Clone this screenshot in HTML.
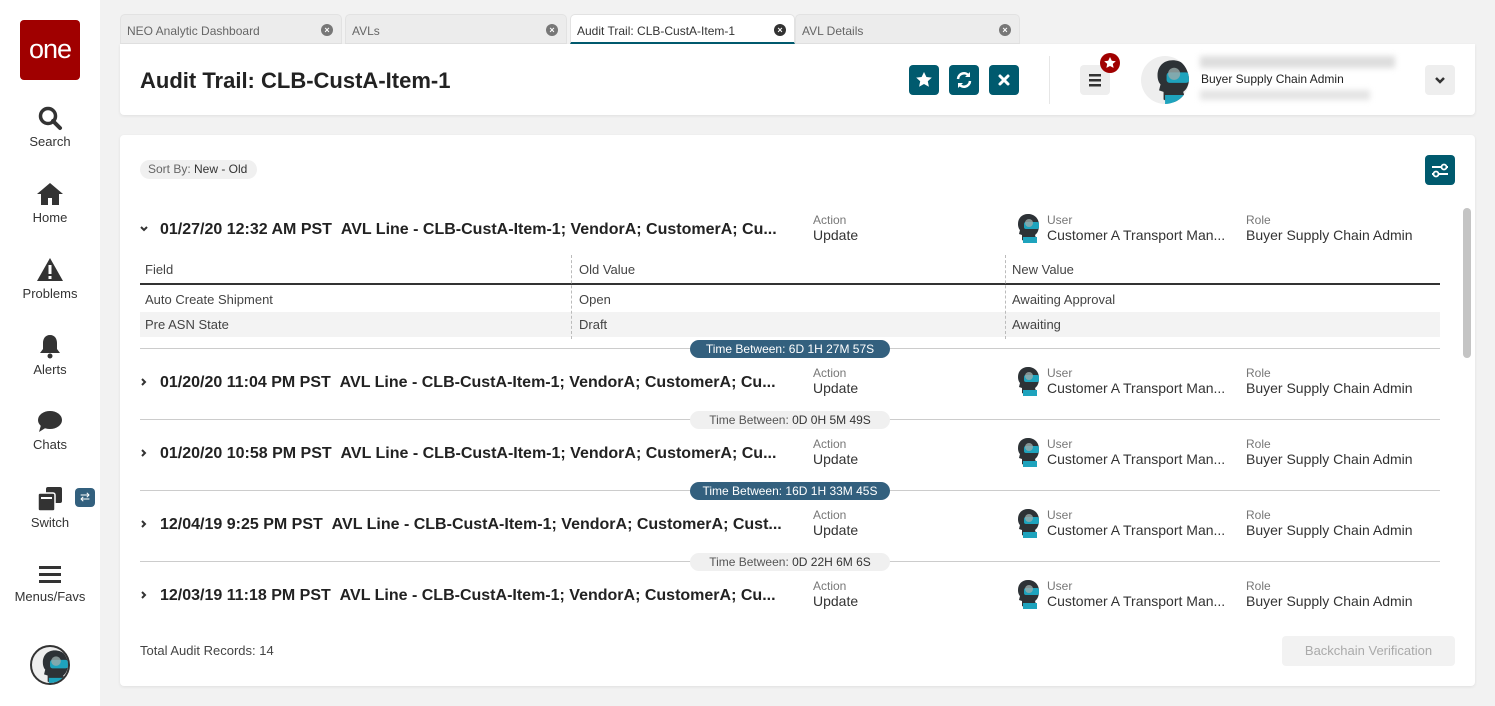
<!DOCTYPE html>
<html><head><style>
*{box-sizing:border-box;margin:0;padding:0}
body{width:1495px;height:706px;background:#f2f2f2;font-family:"Liberation Sans",sans-serif;color:#333;position:relative;overflow:hidden}
.a{position:absolute}
.side{left:0;top:0;width:100px;height:706px;background:#fff}
.nav{position:absolute;left:0;width:100px;text-align:center;font-size:13px;color:#333}
.tab{position:absolute;top:14px;height:30px;background:#ececec;border-radius:5px 5px 0 0;font-size:12px;color:#666;padding:9px 6px;border:1px solid #e2e2e2}
.tab .x{position:absolute;right:8px;top:9px;width:12px;height:12px;border-radius:50%;background:#777;color:#fff;font-size:9px;line-height:12px;text-align:center;font-weight:bold}
.btn{position:absolute;top:65px;width:30px;height:30px;background:#005a6e;border-radius:4px}
.rh{position:absolute;left:160px;width:625px;font-size:16px;font-weight:bold;white-space:nowrap;overflow:hidden;color:#222}
.car{position:absolute;left:139px}
.lbl{position:absolute;font-size:12px;color:#777}
.val{position:absolute;font-size:14px;color:#333;white-space:nowrap}
.sep{position:absolute;left:140px;width:1300px;height:1px;background:#ccc}
.pill{position:absolute;left:690px;width:200px;height:18px;border-radius:9px;font-size:12px;text-align:center;line-height:18px}
.dk{background:#33607e;color:#fff}
.lt{background:#f0f0f0;color:#555}
.ui{position:absolute;left:1015px;width:25px;height:30px}
.td{position:absolute;font-size:13px;color:#444}
</style></head><body>
<svg width="0" height="0" style="position:absolute"><defs><symbol id="hd" viewBox="0 0 25 30"><path d="M13 1c-6 0-10 4-10 10 0 3 1 5 2 6l-1 4 3 1v5c3 2 10 2 15 1l-2-6c3-2 4-6 4-10C24 5 19 1 13 1z" fill="#2d3236"/><rect x="9" y="9" width="15" height="7" rx="2" fill="#1ea3bd"/><circle cx="14" cy="10" r="4" fill="#9aa" opacity=".8"/><path d="M8 24h14v6H8z" fill="#1ea3bd"/></symbol></defs></svg>
<div class="a side"></div>
<div class="a" style="left:20px;top:20px;width:60px;height:60px;background:#a00000;border-radius:4px;color:#fff;font-size:27px;text-align:center;line-height:58px;letter-spacing:-1px">one</div>
<div class="nav" style="top:105px"><svg width="26" height="26" viewBox="0 0 26 26"><circle cx="11" cy="11" r="7.5" fill="none" stroke="#333" stroke-width="3.5"/><path d="M16 16l7 7" stroke="#333" stroke-width="4" stroke-linecap="round"/></svg><div style="margin-top:0">Search</div></div>
<div class="nav" style="top:181px"><svg width="28" height="26" viewBox="0 0 28 26"><path d="M14 2L1 13h4v11h7v-7h4v7h7V13h4z" fill="#333"/></svg><div>Home</div></div>
<div class="nav" style="top:257px"><svg width="28" height="26" viewBox="0 0 28 26"><path d="M14 1L1 24h26z" fill="#333"/><rect x="12.5" y="8" width="3" height="9" fill="#fff"/><rect x="12.5" y="19" width="3" height="3" fill="#fff"/></svg><div>Problems</div></div>
<div class="nav" style="top:333px"><svg width="26" height="26" viewBox="0 0 26 26"><path d="M13 2c-5 0-7 4-7 8v6l-3 4h20l-3-4v-6c0-4-2-8-7-8z" fill="#333"/><circle cx="13" cy="23" r="2.5" fill="#333"/></svg><div>Alerts</div></div>
<div class="nav" style="top:410px"><svg width="28" height="24" viewBox="0 0 28 24"><ellipse cx="14" cy="10" rx="12" ry="9" fill="#333"/><path d="M5 15l-2 7 8-5z" fill="#333"/></svg><div>Chats</div></div>
<div class="nav" style="top:486px"><svg width="26" height="26" viewBox="0 0 26 26"><rect x="9" y="1" width="16" height="16" rx="2" fill="#333"/><rect x="1" y="7" width="17" height="18" rx="2" fill="#333" stroke="#fff" stroke-width="1.5"/><rect x="4" y="11" width="11" height="2" fill="#fff"/></svg><div>Switch</div></div>
<div class="a" style="left:75px;top:488px;width:20px;height:19px;background:#33607e;border-radius:4px;color:#fff;font-size:12px;text-align:center;line-height:19px">⇄</div>
<div class="nav" style="top:564px"><svg width="24" height="22" viewBox="0 0 24 22"><rect x="1" y="2" width="22" height="3" fill="#333"/><rect x="1" y="9" width="22" height="3" fill="#333"/><rect x="1" y="16" width="22" height="3" fill="#333"/></svg><div>Menus/Favs</div></div>
<div class="a" style="left:30px;top:645px;width:40px;height:40px;border-radius:50%;background:#eee;border:2px solid #333;overflow:hidden"><svg width="36" height="36" viewBox="-4 -2 33 34"><use href="#hd"/></svg></div>

<div class="tab" style="left:120px;width:222px">NEO Analytic Dashboard<span class="x">×</span></div>
<div class="tab" style="left:345px;width:222px">AVLs<span class="x">×</span></div>
<div class="tab" style="left:570px;width:225px;background:#fff;color:#333;border-bottom:2px solid #005a6e">Audit Trail: CLB-CustA-Item-1<span class="x" style="background:#333">×</span></div>
<div class="tab" style="left:795px;width:225px">AVL Details<span class="x">×</span></div>

<div class="a" style="left:120px;top:44px;width:1355px;height:71px;background:#fff;border-radius:0 0 4px 4px;box-shadow:0 1px 3px rgba(0,0,0,.08)"></div>
<div class="a" style="left:140px;top:68px;font-size:22px;font-weight:bold;color:#222">Audit Trail: CLB-CustA-Item-1</div>
<div class="btn" style="left:909px"><svg width="30" height="30" viewBox="0 0 30 30"><path d="M15 7l2.4 5 5.4.6-4 3.7 1.1 5.4L15 19l-4.9 2.7 1.1-5.4-4-3.7 5.4-.6z" fill="#fff"/></svg></div>
<div class="btn" style="left:949px"><svg width="30" height="30" viewBox="0 0 30 30"><path d="M9 14a6 6 0 0 1 11-3M21 16a6 6 0 0 1-11 3" stroke="#fff" stroke-width="2.5" fill="none"/><path d="M21 7v5h-5zM9 23v-5h5z" fill="#fff"/></svg></div>
<div class="btn" style="left:989px"><svg width="30" height="30" viewBox="0 0 30 30"><path d="M11 11l8 8M19 11l-8 8" stroke="#fff" stroke-width="3" stroke-linecap="round"/></svg></div>
<div class="a" style="left:1049px;top:56px;width:1px;height:48px;background:#e6e6e6"></div>
<div class="a" style="left:1080px;top:65px;width:30px;height:30px;background:#eee;border-radius:4px"><svg width="30" height="30" viewBox="0 0 30 30"><rect x="9" y="9" width="12" height="2.5" fill="#333"/><rect x="9" y="14" width="12" height="2.5" fill="#333"/><rect x="9" y="19" width="12" height="2.5" fill="#333"/></svg></div>
<div class="a" style="left:1100px;top:53px;width:20px;height:20px;border-radius:50%;background:#a00000"><svg width="20" height="20" viewBox="0 0 20 20"><path d="M10 4l1.8 3.7 4 .5-3 2.7.8 4L10 13l-3.6 1.9.8-4-3-2.7 4-.5z" fill="#fff"/></svg></div>
<div class="a" style="left:1141px;top:56px;width:48px;height:48px;border-radius:50%;background:#eee;overflow:hidden"><svg width="48" height="48" viewBox="-5 -1 35 33"><use href="#hd"/></svg></div>
<div class="a" style="left:1200px;top:56px;width:195px;height:12px;background:#ddd;filter:blur(3px)"></div>
<div class="a" style="left:1201px;top:72px;font-size:12px;color:#222">Buyer Supply Chain Admin</div>
<div class="a" style="left:1200px;top:90px;width:170px;height:10px;background:#e4e4e4;filter:blur(3px)"></div>
<div class="a" style="left:1425px;top:65px;width:30px;height:30px;background:#eee;border-radius:4px;text-align:center"><svg width="30" height="30" viewBox="0 0 30 30"><path d="M11 13l4 4 4-4" stroke="#333" stroke-width="2.5" fill="none"/></svg></div>

<div class="a" style="left:120px;top:135px;width:1355px;height:551px;background:#fff;border-radius:4px;box-shadow:0 1px 3px rgba(0,0,0,.08)"></div>
<div class="a" style="left:140px;top:160px;width:117px;height:19px;background:#f0f0f0;border-radius:10px;font-size:12px;color:#666;line-height:19px;padding-left:8px">Sort By: <span style="color:#333">New - Old</span></div>
<div class="a" style="left:1425px;top:155px;width:30px;height:30px;background:#005a6e;border-radius:4px"><svg width="30" height="30" viewBox="0 0 30 30"><path d="M7 12h16M7 19h16" stroke="#fff" stroke-width="2"/><circle cx="19" cy="12" r="2.5" fill="#005a6e" stroke="#fff" stroke-width="1.8"/><circle cx="11" cy="19" r="2.5" fill="#005a6e" stroke="#fff" stroke-width="1.8"/></svg></div>
<div class="a" style="left:1463px;top:208px;width:8px;height:150px;background:#c4c4c4;border-radius:4px"></div>

<!-- row 1 -->
<svg class="car" style="top:224px" width="10" height="10" viewBox="0 0 10 10"><path d="M2 3l3 3 3-3" stroke="#333" stroke-width="2" fill="none"/></svg>
<div class="rh" style="top:221px">01/27/20 12:32 AM PST&nbsp;&nbsp;AVL Line - CLB-CustA-Item-1; VendorA; CustomerA; Cu...</div>
<div class="lbl" style="left:813px;top:213px">Action</div><div class="val" style="left:813px;top:227px">Update</div>
<svg class="ui" style="top:213px" viewBox="0 0 25 30"><use href="#hd"/></svg>
<div class="lbl" style="left:1047px;top:213px">User</div><div class="val" style="left:1047px;top:227px">Customer A Transport Man...</div>
<div class="lbl" style="left:1246px;top:213px">Role</div><div class="val" style="left:1246px;top:227px">Buyer Supply Chain Admin</div>

<div class="td" style="left:145px;top:262px">Field</div>
<div class="td" style="left:579px;top:262px">Old Value</div>
<div class="td" style="left:1012px;top:262px">New Value</div>
<div class="a" style="left:140px;top:283px;width:1300px;height:2px;background:#333"></div>
<div class="td" style="left:145px;top:292px">Auto Create Shipment</div>
<div class="td" style="left:579px;top:292px">Open</div>
<div class="td" style="left:1012px;top:292px">Awaiting Approval</div>
<div class="a" style="left:140px;top:312px;width:1300px;height:25px;background:#f3f3f3"></div>
<div class="td" style="left:145px;top:317px">Pre ASN State</div>
<div class="td" style="left:579px;top:317px">Draft</div>
<div class="td" style="left:1012px;top:317px">Awaiting</div>
<div class="a" style="left:571px;top:255px;height:84px;border-left:1px dashed #bbb"></div>
<div class="a" style="left:1005px;top:255px;height:84px;border-left:1px dashed #bbb"></div>

<div class="sep" style="top:348px"></div><div class="pill dk" style="top:340px">Time Between: 6D 1H 27M 57S</div>
<div class="sep" style="top:419px"></div><div class="pill lt" style="top:411px">Time Between: <span style="color:#333">0D 0H 5M 49S</span></div>
<div class="sep" style="top:490px"></div><div class="pill dk" style="top:482px">Time Between: 16D 1H 33M 45S</div>
<div class="sep" style="top:561px"></div><div class="pill lt" style="top:553px">Time Between: <span style="color:#333">0D 22H 6M 6S</span></div>

<!-- rows 2-5 -->
<svg class="car" style="top:377px" width="10" height="10" viewBox="0 0 10 10"><path d="M3 2l3 3-3 3" stroke="#333" stroke-width="2" fill="none"/></svg>
<div class="rh" style="top:374px">01/20/20 11:04 PM PST&nbsp;&nbsp;AVL Line - CLB-CustA-Item-1; VendorA; CustomerA; Cu...</div>
<div class="lbl" style="left:813px;top:366px">Action</div><div class="val" style="left:813px;top:380px">Update</div>
<svg class="ui" style="top:366px" viewBox="0 0 25 30"><use href="#hd"/></svg>
<div class="lbl" style="left:1047px;top:366px">User</div><div class="val" style="left:1047px;top:380px">Customer A Transport Man...</div>
<div class="lbl" style="left:1246px;top:366px">Role</div><div class="val" style="left:1246px;top:380px">Buyer Supply Chain Admin</div>

<svg class="car" style="top:448px" width="10" height="10" viewBox="0 0 10 10"><path d="M3 2l3 3-3 3" stroke="#333" stroke-width="2" fill="none"/></svg>
<div class="rh" style="top:445px">01/20/20 10:58 PM PST&nbsp;&nbsp;AVL Line - CLB-CustA-Item-1; VendorA; CustomerA; Cu...</div>
<div class="lbl" style="left:813px;top:437px">Action</div><div class="val" style="left:813px;top:451px">Update</div>
<svg class="ui" style="top:437px" viewBox="0 0 25 30"><use href="#hd"/></svg>
<div class="lbl" style="left:1047px;top:437px">User</div><div class="val" style="left:1047px;top:451px">Customer A Transport Man...</div>
<div class="lbl" style="left:1246px;top:437px">Role</div><div class="val" style="left:1246px;top:451px">Buyer Supply Chain Admin</div>

<svg class="car" style="top:519px" width="10" height="10" viewBox="0 0 10 10"><path d="M3 2l3 3-3 3" stroke="#333" stroke-width="2" fill="none"/></svg>
<div class="rh" style="top:516px">12/04/19 9:25 PM PST&nbsp;&nbsp;AVL Line - CLB-CustA-Item-1; VendorA; CustomerA; Cust...</div>
<div class="lbl" style="left:813px;top:508px">Action</div><div class="val" style="left:813px;top:522px">Update</div>
<svg class="ui" style="top:508px" viewBox="0 0 25 30"><use href="#hd"/></svg>
<div class="lbl" style="left:1047px;top:508px">User</div><div class="val" style="left:1047px;top:522px">Customer A Transport Man...</div>
<div class="lbl" style="left:1246px;top:508px">Role</div><div class="val" style="left:1246px;top:522px">Buyer Supply Chain Admin</div>

<svg class="car" style="top:590px" width="10" height="10" viewBox="0 0 10 10"><path d="M3 2l3 3-3 3" stroke="#333" stroke-width="2" fill="none"/></svg>
<div class="rh" style="top:587px">12/03/19 11:18 PM PST&nbsp;&nbsp;AVL Line - CLB-CustA-Item-1; VendorA; CustomerA; Cu...</div>
<div class="lbl" style="left:813px;top:579px">Action</div><div class="val" style="left:813px;top:593px">Update</div>
<svg class="ui" style="top:579px" viewBox="0 0 25 30"><use href="#hd"/></svg>
<div class="lbl" style="left:1047px;top:579px">User</div><div class="val" style="left:1047px;top:593px">Customer A Transport Man...</div>
<div class="lbl" style="left:1246px;top:579px">Role</div><div class="val" style="left:1246px;top:593px">Buyer Supply Chain Admin</div>

<div class="a" style="left:140px;top:643px;font-size:13px;color:#444">Total Audit Records: 14</div>
<div class="a" style="left:1282px;top:636px;width:173px;height:30px;background:#f2f2f2;border-radius:4px;font-size:13px;color:#aaa;text-align:center;line-height:30px">Backchain Verification</div>
</body></html>
